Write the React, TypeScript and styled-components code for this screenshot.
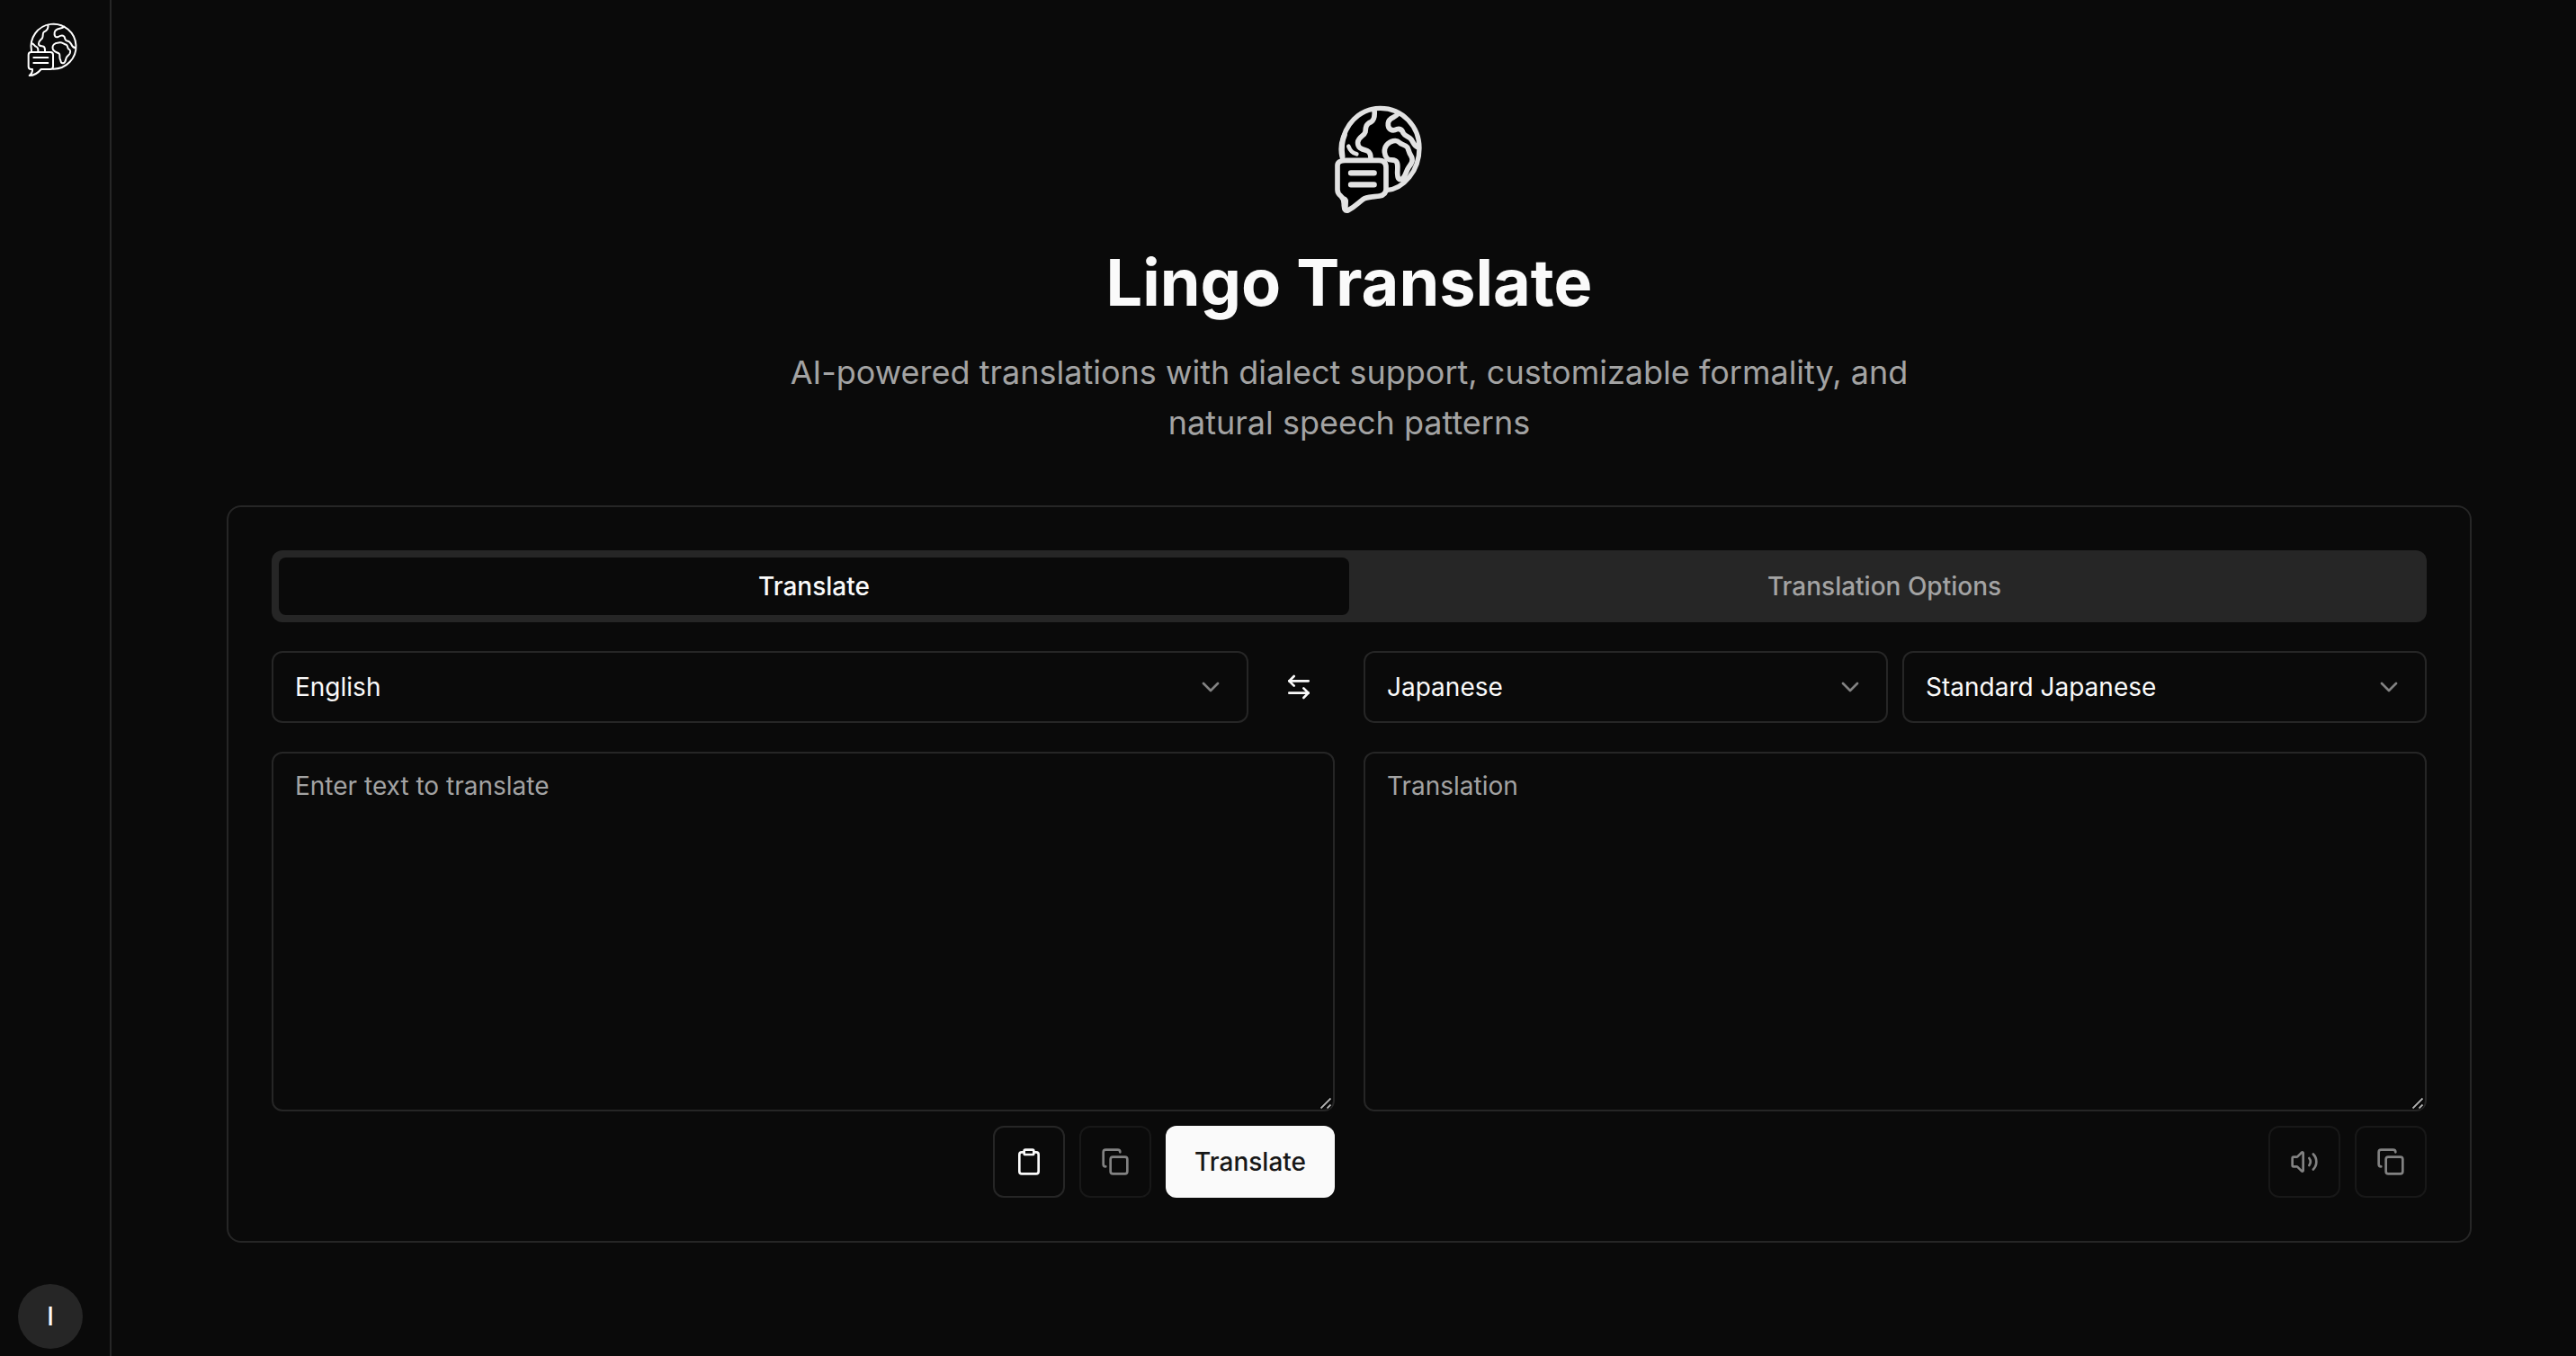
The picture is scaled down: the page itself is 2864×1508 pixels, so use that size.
import React from "react";
import styled, { createGlobalStyle } from "styled-components";
import { ArrowLeftRight, ChevronDown, Clipboard, Copy, Volume2 } from "lucide-react";

const colors = {
  background: "#0a0a0a",
  foreground: "#fafafa",
  muted: "#262626",
  mutedText: "#a3a3a3",
  border: "#262626",
  primaryText: "#171717",
};

const GlobalStyle = createGlobalStyle`
  *, *::before, *::after { box-sizing: border-box; }
  body {
    margin: 0;
    background: ${colors.background};
    color: ${colors.foreground};
    font-family: Inter, "Noto Sans", sans-serif;
    font-size: 28px;
    line-height: 40px;
  }
  button, textarea { font: inherit; color: inherit; }
`;

const Page = styled.div`
  display: flex;
  height: 100vh;
  min-height: 1508px;
  overflow: hidden;
  background: ${colors.background};
`;

const Sidebar = styled.aside`
  display: flex;
  flex-direction: column;
  justify-content: space-between;
  flex: none;
  width: 124px;
  padding: 22px 18px 8px 20px;
  border-right: 2px solid ${colors.border};
`;

const SidebarLogo = styled.div`
  display: flex;
  padding-left: 8px;
`;

const Avatar = styled.div`
  display: flex;
  align-items: center;
  justify-content: center;
  width: 72px;
  height: 72px;
  border-radius: 50%;
  background: ${colors.muted};
  font-weight: 500;
`;

const Main = styled.main`
  flex: 1;
  padding: 100px 116px 0 128px;
`;

const Hero = styled.header`
  display: flex;
  flex-direction: column;
  align-items: center;
  margin-bottom: 64px;
  text-align: center;
`;

const HeroLogo = styled.div`
  display: flex;
  height: 150px;
  margin: 0 0 24px 60px;
`;

const Title = styled.h1`
  margin: 0 0 32px;
  font-size: 72px;
  line-height: 80px;
  font-weight: 700;
`;

const Subtitle = styled.p`
  width: 1344px;
  margin: 0;
  font-size: 36px;
  line-height: 56px;
  color: ${colors.mutedText};
`;

const Card = styled.section`
  display: flex;
  flex-direction: column;
  gap: 32px;
  padding: 48px;
  border: 2px solid ${colors.border};
  border-radius: 16px;
`;

const Tabs = styled.div`
  display: grid;
  grid-template-columns: 1fr 1fr;
  height: 80px;
  padding: 8px;
  border-radius: 12px;
  background: ${colors.muted};
`;

const Tab = styled.button<{ $active?: boolean }>`
  padding: 0;
  border: 0;
  border-radius: 8px;
  background: ${(p) => (p.$active ? colors.background : "transparent")};
  color: ${(p) => (p.$active ? colors.foreground : colors.mutedText)};
  font-weight: 500;
`;

const Columns = styled.div`
  display: grid;
  grid-template-columns: 1fr 1fr;
  gap: 32px;
`;

const Row = styled.div`
  display: flex;
  gap: 16px;
`;

const Actions = styled(Row)`
  justify-content: flex-end;
`;

const Panel = styled.div`
  display: flex;
  flex-direction: column;
  gap: 16px;
`;

const Select = styled.button`
  display: flex;
  flex: 1;
  align-items: center;
  justify-content: space-between;
  height: 80px;
  padding: 0 24px;
  border: 2px solid ${colors.border};
  border-radius: 12px;
  background: transparent;

  svg { opacity: 0.5; }
`;

const IconButton = styled.button<{ $ghost?: boolean }>`
  display: flex;
  align-items: center;
  justify-content: center;
  width: 80px;
  height: 80px;
  padding: 0;
  border: 2px solid ${(p) => (p.$ghost ? "transparent" : colors.border)};
  border-radius: 12px;
  background: transparent;

  &:disabled { opacity: 0.5; color: ${colors.foreground}; }
`;

const PrimaryButton = styled.button`
  height: 80px;
  padding: 0 32px;
  border: 0;
  border-radius: 12px;
  background: ${colors.foreground};
  color: ${colors.primaryText};
  font-weight: 500;
`;

const Field = styled.div`
  position: relative;
  display: flex;
  height: 400px;
`;

const TextArea = styled.textarea`
  flex: 1;
  padding: 16px 24px;
  border: 2px solid ${colors.border};
  border-radius: 12px;
  outline: 0;
  background: transparent;
  resize: none;

  &::placeholder { color: ${colors.mutedText}; opacity: 1; }
`;

const Grip = styled.svg`
  position: absolute;
  right: 2px;
  bottom: 2px;
`;

function ResizableField({ placeholder }: { placeholder: string }) {
  return (
    <Field>
      <TextArea placeholder={placeholder} />
      <Grip width="16" height="14" viewBox="0 0 16 14" fill="none">
        <path d="M2.5 12.5 13.5 1.5M9.5 12.5 13.5 8.5" stroke="#000" strokeWidth="4" />
        <path d="M2.5 12.5 13.5 1.5M9.5 12.5 13.5 8.5" stroke="#b0b0b0" strokeWidth="1.8" />
      </Grip>
    </Field>
  );
}

function GlobeLogoBold() {
  return (
    <svg width="140" height="150" viewBox="0 0 420 450" fill="none" stroke="#e2e2e2" strokeWidth="17" strokeLinecap="round" strokeLinejoin="round">
      <path d="M97 232C91 205 93 178 101 156C121 96 169 61 224 61C298 61 354 122 354 194C354 270 301 331 242 335L180 300Z" fill="#000" stroke="none" />
      <path d="M97 226C91 205 93 178 101 156C121 96 169 61 224 61C298 61 354 122 354 194C354 270 301 331 244 335" strokeWidth="16" />
      <path d="M98 222C94 196 96 170 105 150" strokeWidth="17" />
      <path d="M204 68C206 85 205 99 193 107C176 114 175 124 174 140C170 154 151 156 149 174C147 195 163 198 180 203C190 207 192 216 192 229" />
      <path d="M118 188C123 202 131 211 145 214" strokeWidth="14" />
      <path d="M282 80C276 93 252 91 250 111C248 132 264 139 279 131C290 128 297 133 301 145C306 155 319 155 327 165C335 177 337 189 350 192" />
      <path d="M247 229C237 218 234 198 245 184C257 169 278 165 287 175C294 184 306 181 314 191C319 199 319 210 326 219C336 235 327 247 319 257C309 270 309 292 294 298C280 300 282 286 281 277C281 260 285 242 274 236C265 231 257 236 249 230" />
      <path d="M106 235H219C235 235 243 243 243 258V331C243 344 235 352 221 354C205 357 179 355 166 365C150 377 139 390 116 402C106 405 104 398 103 386C102 372 104 364 93 355C84 348 81 343 81 333V252C81 241 91 235 106 235Z" fill="#000" />
      <path d="M106 362Q112 366 111 374L110 396" strokeWidth="12" />
      <path d="M126 277H203M126 316H203" strokeWidth="19" />
    </svg>
  );
}

function GlobeLogo() {
  return (
    <svg width="60" height="66" viewBox="84 66 180 198" fill="none" stroke="#fff" strokeWidth="6" strokeLinecap="round" strokeLinejoin="round">
      <path d="M105 170A75 75 0 1 1 177 230" />
      <path d="M160 83C163 97 152 104 146 107C141 111 145 121 141 127C137 133 129 136 129 146C129 155 137 153 145 155C151 158 150 165 150 171" />
      <path d="M105 145C112 145 114 151 119 155C127 158 128 163 127 171" />
      <path d="M214 89C204 98 184 93 182 108C180 120 185 126 194 123C199 120 208 116 213 121C218 125 215 133 222 136C230 137 234 141 238 148C241 156 245 159 252 160" />
      <path d="M181 170C174 166 174 154 179 149C186 141 194 143 200 142C208 141 212 147 221 149C227 152 224 160 229 164C237 168 235 172 233 178C230 184 223 187 221 193C218 201 219 210 210 211C201 212 204 204 201 199C197 193 201 186 198 180C194 175 188 176 181 170Z" />
      <path d="M104 174H168Q177 174 177 183V222Q177 231 168 231H137C128 242 118 252 98 252C106 246 109 240 108 231H104Q95 231 95 222V183Q95 174 104 174Z" />
      <path d="M112 192H160M112 210H160" />
    </svg>
  );
}

export default function App() {
  return (
    <>
      <GlobalStyle />
      <Page>
        <Sidebar>
          <SidebarLogo><GlobeLogo /></SidebarLogo>
          <Avatar>I</Avatar>
        </Sidebar>
        <Main>
          <Hero>
            <HeroLogo><GlobeLogoBold /></HeroLogo>
            <Title>Lingo Translate</Title>
            <Subtitle>
              AI-powered translations with dialect support, customizable formality, and natural speech patterns
            </Subtitle>
          </Hero>
          <Card>
            <Tabs>
              <Tab $active>Translate</Tab>
              <Tab>Translation Options</Tab>
            </Tabs>
            <Columns>
              <Row>
                <Select>English<ChevronDown size={32} /></Select>
                <IconButton $ghost aria-label="Swap languages"><ArrowLeftRight size={32} /></IconButton>
              </Row>
              <Row>
                <Select>Japanese<ChevronDown size={32} /></Select>
                <Select>Standard Japanese<ChevronDown size={32} /></Select>
              </Row>
            </Columns>
            <Columns>
              <Panel>
                <ResizableField placeholder="Enter text to translate" />
                <Actions>
                  <IconButton aria-label="Paste"><Clipboard size={32} /></IconButton>
                  <IconButton disabled aria-label="Copy source"><Copy size={32} /></IconButton>
                  <PrimaryButton>Translate</PrimaryButton>
                </Actions>
              </Panel>
              <Panel>
                <ResizableField placeholder="Translation" />
                <Actions>
                  <IconButton disabled aria-label="Listen"><Volume2 size={32} /></IconButton>
                  <IconButton disabled aria-label="Copy translation"><Copy size={32} /></IconButton>
                </Actions>
              </Panel>
            </Columns>
          </Card>
        </Main>
      </Page>
    </>
  );
}
